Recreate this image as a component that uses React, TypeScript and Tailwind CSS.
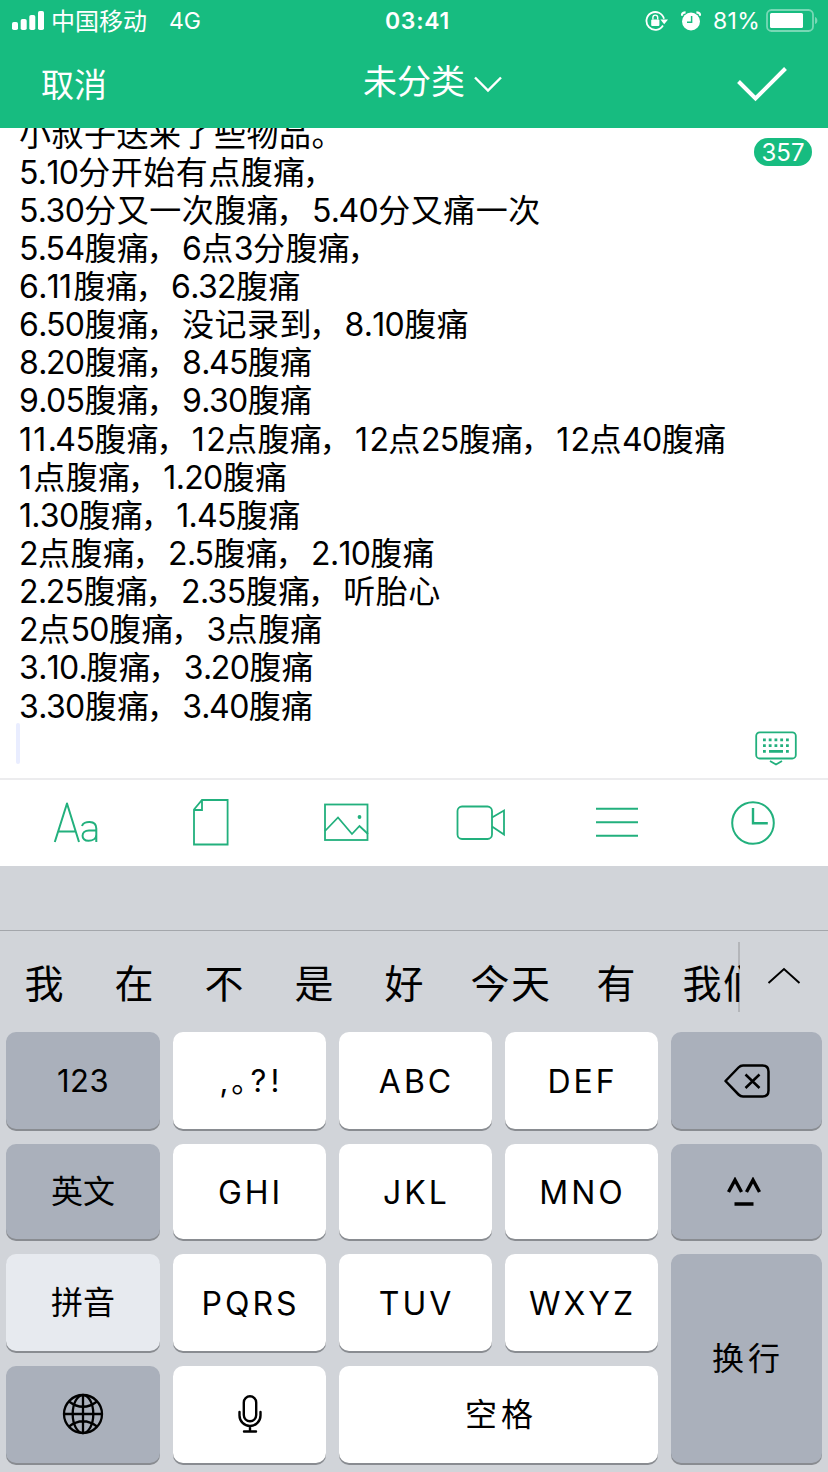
import type { ReactNode } from "react";

const noteLines = [
  "小叔子送来了些物品。",
  "5.10分开始有点腹痛，",
  "5.30分又一次腹痛，5.40分又痛一次",
  "5.54腹痛，6点3分腹痛，",
  "6.11腹痛，6.32腹痛",
  "6.50腹痛，没记录到，8.10腹痛",
  "8.20腹痛，8.45腹痛",
  "9.05腹痛，9.30腹痛",
  "11.45腹痛，12点腹痛，12点25腹痛，12点40腹痛",
  "1点腹痛，1.20腹痛",
  "1.30腹痛，1.45腹痛",
  "2点腹痛，2.5腹痛，2.10腹痛",
  "2.25腹痛，2.35腹痛，听胎心",
  "2点50腹痛，3点腹痛",
  "3.10.腹痛，3.20腹痛",
  "3.30腹痛，3.40腹痛",
];

const candidates = ["我", "在", "不", "是", "好", "今天", "有", "我们"];

function StatusBar() {
  return (
    <div className="flex h-[42px] items-center pl-3 text-white">
      <svg width="32" height="20" viewBox="0 0 32 20" fill="currentColor">
        <rect x="0" y="11" width="6" height="8" rx="1.8" />
        <rect x="8.7" y="8" width="6" height="11" rx="1.8" />
        <rect x="17.3" y="4" width="6" height="15" rx="1.8" />
        <rect x="26" y="0" width="6" height="19" rx="1.8" />
      </svg>
      <span className="ml-[7px] w-[118px] pt-[2px] text-[24px]">中国移动</span>
      <span className="w-[216px] pt-px text-[23px]">4G</span>
      <span className="w-[260px] pt-px text-[23px] font-semibold tracking-[0.7px]">03:41</span>
      <svg width="24" height="22" viewBox="0 0 24 22" fill="none" stroke="currentColor">
        <path d="M18 15.500A8.900 8.900 0 1 1 19 8.800" strokeWidth="1.800" />
        <path d="M15.400 9.400h7.600l-3.800 4.800z" fill="currentColor" stroke="none" />
        <rect x="6.200" y="9.400" width="8.200" height="6.600" rx="1" fill="currentColor" stroke="none" />
        <path d="M7.900 9.500V7.500a2.400 2.400 0 0 1 4.800 0v2" strokeWidth="1.400" />
      </svg>
      <svg className="ml-3" width="20" height="20" viewBox="0 0 20 20">
        <circle cx="10" cy="10.500" r="9" fill="#fff" />
        <path d="M.8 4.800Q.8 1.500 4.600 1.400M19.200 4.800Q19.200 1.500 15.400 1.400" fill="none" stroke="#fff" strokeWidth="2.200" />
        <path d="M10.600 5v6.200H6" fill="none" stroke="#17bc80" strokeWidth="1.500" />
      </svg>
      <span className="ml-[12px] w-[53px] pt-px text-[23px] tracking-[0.3px] whitespace-nowrap">81%</span>
      <svg className="-mt-px" width="53" height="23" viewBox="0 0 53 23">
        <rect x="1" y="1" width="46" height="21" rx="4.500" fill="none" stroke="#fff" strokeOpacity=".42" strokeWidth="1.800" />
        <rect x="4" y="4" width="33" height="15" rx="1.500" fill="#fff" />
        <path d="M49 8c3.200 1 3.200 6.200 0 7z" fill="#fff" fillOpacity=".42" />
      </svg>
    </div>
  );
}

function NavBar() {
  return (
    <div className="flex h-[86px] items-start text-white">
      <span className="ml-[41px] w-[322px] pt-[19px] text-[33px] leading-[48px]">取消</span>
      <span className="pt-[16px] text-[34px] leading-[48px]">未分类</span>
      <svg className="mt-[33px] ml-[8px]" width="30" height="18" viewBox="0 0 30 18" fill="none" stroke="currentColor" strokeWidth="2.400">
        <path d="M2 2.500 15 15.500 28 2.500" />
      </svg>
      <svg className="mt-[23px] ml-[233px]" width="52" height="37" viewBox="0 0 52 37" fill="none" stroke="currentColor" strokeWidth="4">
        <path d="M2.500 16.500 19.500 33.500 49.500 3.500" />
      </svg>
    </div>
  );
}

function runClass(run: string) {
  if (run === "，") return "-ml-[3px] mr-[3px] tracking-[0.5px]";
  if (run === ".1" || run === "1.") return "tracking-[-0.7px]";
  if (run === ".") return "tracking-[-1.5px]";
  if (run[0] === "1") return "tracking-[1.3px]";
  if (/\d/.test(run)) return "tracking-[-0.6px]";
  return "tracking-[0.5px]";
}

// narrow digits, wide digits, dots and Chinese text are each spaced differently
function NoteLine({ text }: { text: string }) {
  const runs = text.match(/\.1|1\.|1+|\.|，|[02-9]+|[^\d.，]+/g) ?? [];
  return (
    <p>
      {runs.map((run, i) => (
        <span key={i} className={runClass(run)}>
          {run}
        </span>
      ))}
    </p>
  );
}

function Toolbar() {
  return (
    <div className="flex h-[88px] items-center border-t-2 border-[#ececee] pb-[2px] text-[#22b07d]">
      <svg className="ml-[52px]" width="48" height="46" viewBox="0 0 48 46" fill="none" stroke="currentColor" strokeWidth="2" strokeLinejoin="round">
        <path d="M2.800 43 15 4.500 27 43M6.500 32.500h17" />
        <path d="M30 27c1.500-5 14.300-6.500 14.300 2.500V43M44.300 31.500H37c-8.500 0-8.500 10.300-.5 10.300 4 0 7.800-2 7.800-6" />
      </svg>
      <svg className="ml-[92px]" width="38" height="48" viewBox="0 0 38 48" fill="none" stroke="currentColor" strokeWidth="1.800">
        <path d="M10 2h25.600v44.500H2V11.500zM10 2v10H2" />
      </svg>
      <svg className="ml-[93px]" width="46" height="38" viewBox="0 0 46 38" fill="none" stroke="currentColor" strokeWidth="1.800">
        <rect x="2" y="1.500" width="42.500" height="35.500" />
        <path d="M2 28 15 14.500 29 31l7.500-8 8.500 8" />
        <circle cx="36.500" cy="14" r="1.900" fill="currentColor" stroke="none" />
      </svg>
      <svg className="mt-px ml-[87px]" width="50" height="36" viewBox="0 0 50 36" fill="none" stroke="currentColor" strokeWidth="1.800">
        <rect x="1.500" y="1.500" width="34.500" height="32.500" rx="4.500" />
        <path d="M36 12.500 48 5.500v24l-12-8" />
      </svg>
      <svg className="ml-[90px]" width="42" height="32" viewBox="0 0 42 32" stroke="currentColor" strokeWidth="2">
        <path d="M0 2.800h42M0 16.300h42M0 29.800h42" />
      </svg>
      <svg className="mt-[2px] ml-[93px]" width="44" height="44" viewBox="0 0 44 44" fill="none" stroke="currentColor" strokeWidth="2">
        <circle cx="22" cy="22" r="20.800" />
        <path d="M22 7v15.200h14.800" strokeWidth="2.400" />
      </svg>
    </div>
  );
}

type KeyProps = {
  children: ReactNode;
  tone?: "white" | "gray" | "light";
  className?: string;
};

const tones = {
  white: "bg-white",
  gray: "bg-[#aab0bb]",
  light: "bg-[#e7eaef]",
};

function Key({ children, tone = "white", className = "" }: KeyProps) {
  return (
    <div
      className={`flex items-center justify-center rounded-[10px] text-[32px] shadow-[0_2px_0_#898c91] ${tones[tone]} ${className}`}
    >
      {children}
    </div>
  );
}

function Keyboard() {
  return (
    <div className="grid grid-cols-[154px_153px_153px_153px_151px] grid-rows-[97px_95px_97px_97px] gap-x-[13px] gap-y-[15px] pl-[6px]">
      <Key tone="gray" className="pt-[2px]">
        <span className="text-[31px] tracking-[0.5px]">123</span>
      </Key>
      <Key className="pt-[2px]">
        <span className="flex items-baseline text-[31px]">
          <span className="w-[12px]">,</span>
          <span className="w-[19px]">｡</span>
          <span className="w-[20px]">?</span>
          <span>!</span>
        </span>
      </Key>
      <Key className="pt-[2px] pl-[2px] tracking-[3px]">ABC</Key>
      <Key className="pt-[2px] pl-[2px] tracking-[3px]">DEF</Key>
      <Key tone="gray">
        <svg width="46" height="34" viewBox="0 0 46 34" fill="none" stroke="#000" strokeWidth="2.500" strokeLinejoin="round">
          <path d="M1.500 17 14.500 3.500Q16.500 1.500 19 1.500h19.500q6 0 6 6v19q0 6-6 6H19q-2.500 0-4.500-2z" />
          <path d="m21.500 10.500 14 13.500M35.500 10.500 21.500 24" />
        </svg>
      </Key>

      <Key tone="gray" className="pt-px">英文</Key>
      <Key className="pt-[2px] pl-[2px] tracking-[3px]">GHI</Key>
      <Key className="pt-[2px] pl-[2px] tracking-[3px]">JKL</Key>
      <Key className="pt-[2px] pl-[2px] tracking-[3px]">MNO</Key>
      <Key tone="gray" className="pr-[5px]">
        <svg width="36" height="30" viewBox="0 0 36 30" fill="none" stroke="#000" strokeWidth="3.400">
          <path d="M2.500 15 9 3 15.500 15M20.500 15 27 3 33.500 15M8.500 27h19" />
        </svg>
      </Key>

      <Key tone="light" className="pt-px">拼音</Key>
      <Key className="pt-[2px] pl-[2px] tracking-[3px]">PQRS</Key>
      <Key className="pt-[2px] pl-[2px] tracking-[3px]">TUV</Key>
      <Key className="pt-[2px] pl-[2px] tracking-[3px]">WXYZ</Key>
      <Key tone="gray" className="row-span-2 pt-px pl-[3px] tracking-[4px]">换行</Key>

      <Key tone="gray">
        <svg className="-mt-[2px]" width="42" height="42" viewBox="0 0 42 42" fill="none" stroke="#000" strokeWidth="2.300">
          <circle cx="21" cy="21" r="19" />
          <ellipse cx="21" cy="21" rx="10.300" ry="19" />
          <path d="M21 2v38M2 21h38M7 8.500q14 10.500 28 0M7 33.500q14-10.500 28 0" />
        </svg>
      </Key>
      <Key>
        <svg className="-mt-[2px]" width="24" height="38" viewBox="0 0 24 38" fill="none" stroke="#000" strokeWidth="2.400" strokeLinecap="round">
          <rect x="5.800" y="1.300" width="12.400" height="25" rx="6.200" />
          <path d="M1.500 17v3.500a10.500 10.500 0 0 0 21 0V17M12 31v5.500M6 36.500h12" />
        </svg>
      </Key>
      <Key className="col-span-2 pt-px pl-[5px] tracking-[4px]">空格</Key>
    </div>
  );
}

export default function App() {
  return (
    <div className="h-[1472px] w-[828px] overflow-hidden bg-white font-['Inter','Noto_Sans_CJK_SC',sans-serif] text-black">
      <header className="h-[128px] bg-[#17bc80]">
        <StatusBar />
        <NavBar />
      </header>

      <main className="relative h-[650px] overflow-hidden">
        <div className="-mt-[12.500px] pl-[19px] text-[32px] leading-[38.14px] whitespace-nowrap [font-kerning:none]">
          {noteLines.map((line) => (
            <NoteLine key={line} text={line} />
          ))}
        </div>
        <div className="-mt-[2.500px] ml-4 h-[41px] w-1 rounded-sm bg-[#e9edff]" />
        <span className="absolute top-[10px] right-4 flex h-7 w-[58px] items-center justify-center rounded-full bg-[#17bc80] pt-[2px] text-[24px] text-white">
          357
        </span>
        <svg className="absolute top-[602px] right-[31px] text-[#22b07d]" width="42" height="36" viewBox="0 0 42 36" fill="none" stroke="currentColor" strokeWidth="1.800">
          <rect x="1.200" y="2.300" width="39.600" height="26.200" rx="3.500" />
          <path d="M8 9.800h28M8 15.600h28" strokeWidth="2.800" strokeDasharray="2.8 2.950" />
          <path d="M8 21.400h2.800M14 21.400h14M31 21.400h2.800" strokeWidth="2.800" />
          <path d="m15 31 6 3.500 6-3.500" />
        </svg>
      </main>

      <Toolbar />

      <section className="h-[606px] bg-[#d1d4d9]">
        <div className="h-[65px] border-b border-[#a3a6ab]" />
        <div className="flex h-[101px] items-start">
          <div className="mt-[11px] flex h-[70px] w-[740px] items-center overflow-hidden pt-[14px] text-[39px] whitespace-nowrap shadow-[inset_-2px_0_0_#b4b6ba]">
            {candidates.map((word) => (
              <span
                key={word}
                className={
                  word.length > 1
                    ? "w-[122px] shrink-0 text-center tracking-[1.500px]"
                    : "w-[90px] shrink-0 pr-[2px] text-center"
                }
              >
                {word}
              </span>
            ))}
          </div>
          <svg className="mt-[35px] ml-[27px]" width="34" height="20" viewBox="0 0 34 20" fill="none" stroke="#000" strokeWidth="2">
            <path d="M1.500 17 17 3l15.500 14" />
          </svg>
        </div>
        <Keyboard />
      </section>
    </div>
  );
}
